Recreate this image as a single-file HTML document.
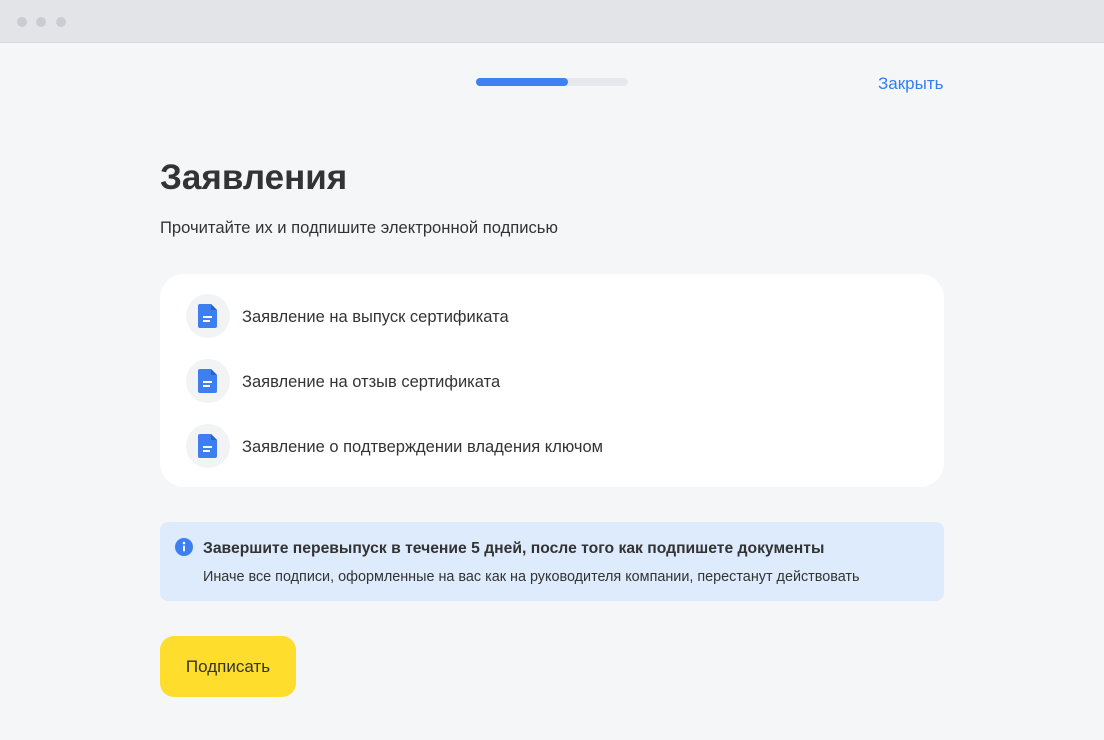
<!DOCTYPE html>
<html><head><meta charset="utf-8"><style>
*{margin:0;padding:0;box-sizing:border-box}
body{width:1104px;height:740px;background:#f5f6f8;font-family:"Liberation Sans",sans-serif;position:relative;overflow:hidden;color:#333}
.top{position:absolute;left:0;top:0;width:1104px;height:43px;background:#e2e4e8;border-bottom:1px solid #d6d8dc}
.dot{position:absolute;top:17px;width:10px;height:10px;border-radius:50%;background:#c9ccd1}
.prog{position:absolute;left:476px;top:78px;width:152px;height:8px;border-radius:4px;background:#e6e8eb}
.prog div{width:92px;height:8px;border-radius:4px;background:#3d83f0}
.close{position:absolute;left:878px;top:74px;color:#2f7ff0;font-size:17px}
h1{position:absolute;left:160px;top:158px;font-size:35px;font-weight:bold;color:#333}
.sub{position:absolute;left:160px;top:218px;font-size:16.6px;color:#333}
.card{position:absolute;left:160px;top:274px;width:784px;height:213px;background:#fff;border-radius:24px}
.row{position:absolute;left:26px;height:44px;display:flex;align-items:center}
.ic{width:44px;height:44px;border-radius:50%;background:#f2f3f5;display:flex;align-items:center;justify-content:center;margin-right:12px}
.row span{font-size:16.5px;color:#333;padding-top:2px}
.info{position:absolute;left:160px;top:522px;width:784px;height:79px;background:#deebfd;border-radius:8px}
.info b{position:absolute;left:43px;top:18px;font-size:15.7px;color:#333}
.info p{position:absolute;left:43px;top:47px;font-size:14.4px;color:#333}
.btn{position:absolute;left:160px;top:636px;width:136px;height:61px;background:#ffdd2d;border-radius:14px;font-size:17px;display:flex;align-items:center;justify-content:center;color:#333}
</style></head><body>
<div class="top"><div class="dot" style="left:17px"></div><div class="dot" style="left:36px"></div><div class="dot" style="left:56px"></div></div>
<div class="prog"><div></div></div>
<div class="close">Закрыть</div>
<h1>Заявления</h1>
<div class="sub">Прочитайте их и подпишите электронной подписью</div>
<div class="card">
<div class="row" style="top:20px"><div class="ic"><svg width="20" height="24" viewBox="0 0 20 24"><path d="M2 0h11l6 6v16a2 2 0 0 1-2 2H2a2 2 0 0 1-2-2V2a2 2 0 0 1 2-2z" fill="#3d7ff0"/><path d="M13 0v6h6z" fill="#2a62c9"/><rect x="5" y="12" width="9" height="2" fill="#fff"/><rect x="5" y="16" width="7" height="2" fill="#fff"/></svg></div><span>Заявление на выпуск сертификата</span></div>
<div class="row" style="top:85px"><div class="ic"><svg width="20" height="24" viewBox="0 0 20 24"><path d="M2 0h11l6 6v16a2 2 0 0 1-2 2H2a2 2 0 0 1-2-2V2a2 2 0 0 1 2-2z" fill="#3d7ff0"/><path d="M13 0v6h6z" fill="#2a62c9"/><rect x="5" y="12" width="9" height="2" fill="#fff"/><rect x="5" y="16" width="7" height="2" fill="#fff"/></svg></div><span>Заявление на отзыв сертификата</span></div>
<div class="row" style="top:150px"><div class="ic"><svg width="20" height="24" viewBox="0 0 20 24"><path d="M2 0h11l6 6v16a2 2 0 0 1-2 2H2a2 2 0 0 1-2-2V2a2 2 0 0 1 2-2z" fill="#3d7ff0"/><path d="M13 0v6h6z" fill="#2a62c9"/><rect x="5" y="12" width="9" height="2" fill="#fff"/><rect x="5" y="16" width="7" height="2" fill="#fff"/></svg></div><span>Заявление о подтверждении владения ключом</span></div>
</div>
<div class="info">
<svg style="position:absolute;left:15px;top:16px" width="18" height="18" viewBox="0 0 18 18"><circle cx="9" cy="9" r="9" fill="#3d7ff0"/><circle cx="9" cy="5" r="1.3" fill="#fff"/><rect x="8" y="7.5" width="2" height="6" rx="1" fill="#fff"/></svg>
<b>Завершите перевыпуск в течение 5 дней, после того как подпишете документы</b>
<p>Иначе все подписи, оформленные на вас как на руководителя компании, перестанут действовать</p>
</div>
<div class="btn">Подписать</div>
</body></html>
